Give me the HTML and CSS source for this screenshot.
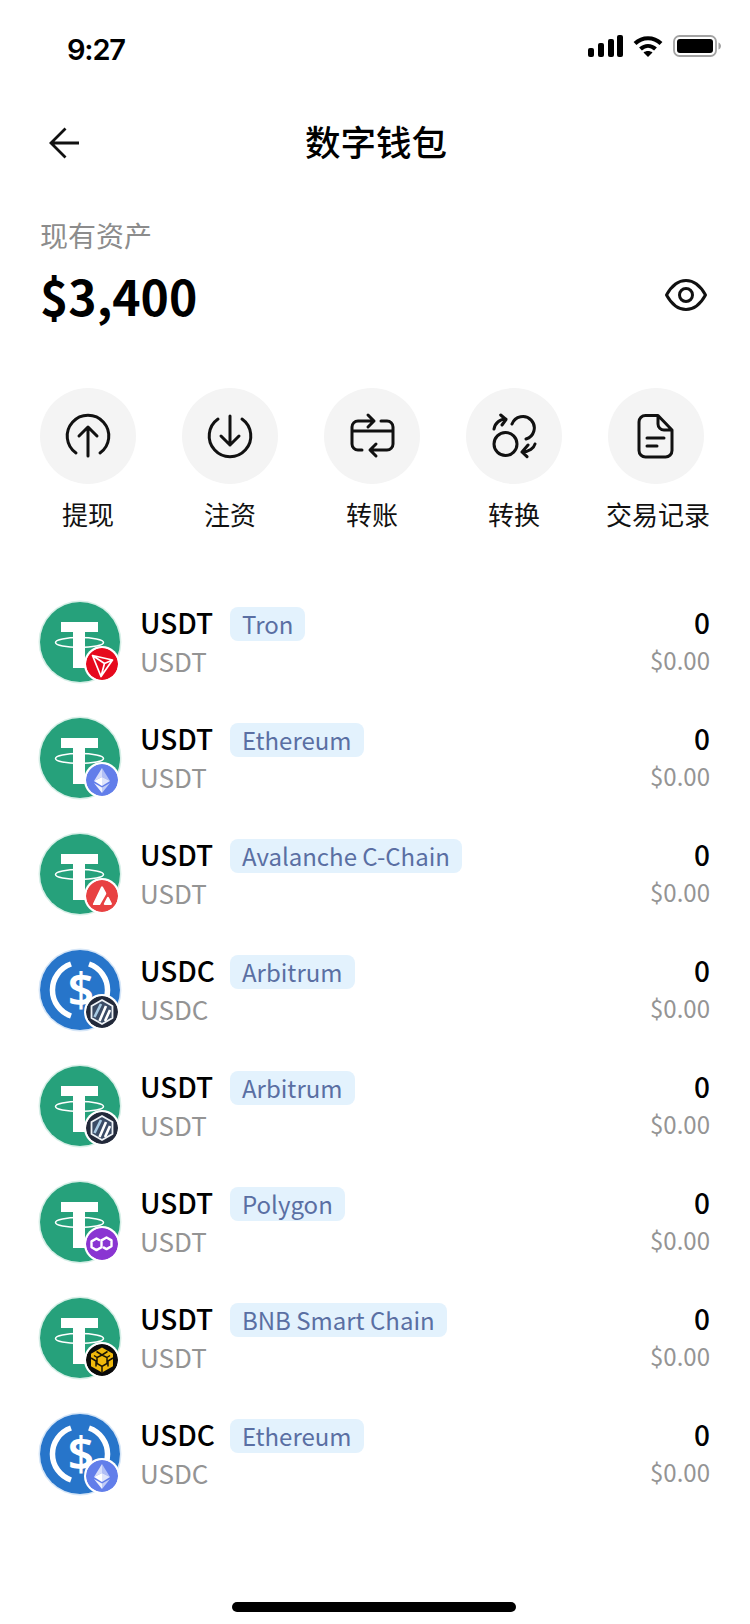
FILE: index.html
```html
<!DOCTYPE html>
<html lang="zh-CN">
<head>
  <meta charset="UTF-8">
  <meta name="viewport" content="width=device-width, initial-scale=1">
  <title>数字钱包</title>
  <link rel="stylesheet" href="styles.css">
</head>
<body>
  <!-- shared logos -->
  <svg class="defs" width="0" height="0" aria-hidden="true">
    <symbol id="usdt" viewBox="0 0 80 80">
      <circle cx="40" cy="40" r="40" fill="#26a17b"/>
      <path d="M21 20h37v10H45v12h-12V30H21z M33 42h12v24H33z" fill="#fff"/>
      <ellipse cx="39.500" cy="40.500" rx="24" ry="5" fill="none" stroke="#fff" stroke-width="1.500"/>
    </symbol>
    <symbol id="usdc" viewBox="0 0 80 80">
      <circle cx="40" cy="40" r="40" fill="#2775ca"/>
      <path d="M31 14A27.500 27.500 0 0 0 31 66M49 14A27.500 27.500 0 0 1 49 66" fill="none" stroke="#fff" stroke-width="5.500"/>
    </symbol>
    <symbol id="tron" viewBox="0 0 32 32">
      <circle cx="16" cy="16" r="16" fill="#e60a1e"/>
      <path d="M6.500 7.500l20 4.500-11.500 16.500zM6.500 7.500l12 8 8-3.500M18.500 15.500l-3.500 13" fill="none" stroke="#fff" stroke-width="1.700" stroke-linejoin="round"/>
    </symbol>
    <symbol id="eth" viewBox="0 0 32 32">
      <circle cx="16" cy="16" r="16" fill="#627eea"/>
      <path d="M16 4v9l-8 4z" fill="#fff" opacity=".75"/>
      <path d="M16 4v9l8 4z" fill="#fff" opacity=".5"/>
      <path d="M8 17l8-4v9z" fill="#fff"/>
      <path d="M24 17l-8-4v9z" fill="#fff" opacity=".8"/>
      <path d="M8 19l8 10v-5.500z" fill="#fff" opacity=".9"/>
      <path d="M24 19l-8 10v-5.500z" fill="#fff" opacity=".6"/>
    </symbol>
    <symbol id="avax" viewBox="0 0 32 32">
      <circle cx="16" cy="16" r="16" fill="#e84142"/>
      <path d="M15 7c.6-1 1.400-1 2 0l3 5.500c.4.800.4 1.400 0 2.100L14 25H8c-1 0-1.400-.7-.9-1.600z" fill="#fff"/>
      <path d="M21 17.500c.5-.9 1.400-.9 1.900 0l2.900 5.800c.4.800 0 1.700-1 1.700h-6c-.9 0-1.300-.8-.8-1.700z" fill="#fff"/>
    </symbol>
    <symbol id="arb" viewBox="0 0 32 32">
      <circle cx="16" cy="16" r="16" fill="#22293a"/>
      <path d="M16 4l10.500 6v12L16 28 5.500 22V10z" fill="#3b4c66" stroke="#eef2f6" stroke-width="1.800" stroke-linejoin="round"/>
      <path d="M8.500 21l6.500-13" fill="none" stroke="#a9cbe4" stroke-width="2.600"/>
      <path d="M13.500 25l6.500-15M19 25l5-11" fill="none" stroke="#fff" stroke-width="2.600"/>
    </symbol>
    <symbol id="matic" viewBox="0 0 32 32">
      <circle cx="16" cy="16" r="16" fill="#8a35d2"/>
      <path d="M14 12.500l-3.500-2-5 2.900v5.800l5 2.900 5-2.900v-6.800l5-2.900 5 2.900v5.800l-5 2.900-3.500-2" fill="none" stroke="#fff" stroke-width="2.400" stroke-linejoin="round"/>
    </symbol>
    <symbol id="bnb" viewBox="0 0 32 32">
      <circle cx="16" cy="16" r="16" fill="#0b0b0b"/>
      <path d="M16 3.500l11 6.300v12.400l-11 6.300-11-6.300V9.800z" fill="#f0b90b"/>
      <path d="M10.500 7.500L16 11l5.500-3.500M5 14l5 3v5.500M27 14l-5 3v5.500M16 11v0M11 13.500l5-2.500 5 2.500v6l-5 3-5-3zM16 23v5.500M11 13.500l-3-2M21 13.500l3-2" fill="none" stroke="#1a1405" stroke-width="1.500"/>
    </symbol>
  </svg>

  <div class="status-bar">
    <span class="time">9:27</span>
    <div class="status-icons">
      <svg width="35" height="22" viewBox="0 0 35 22"><rect x="0" y="13" width="6" height="9" rx="2"/><rect x="10" y="8" width="6" height="14" rx="2"/><rect x="20" y="4" width="6" height="18" rx="2"/><rect x="29" y="0" width="6" height="22" rx="2"/></svg>
      <svg width="30" height="22" viewBox="0 0 30 22"><path d="M2 8.500c7.500-7 18.500-7 26 0M7.500 14c4.500-4 10.500-4 15 0" fill="none" stroke="#000" stroke-width="4.200"/><path d="M15 22l-4.500-4.500c2.500-2 6.500-2 9 0z"/></svg>
      <svg width="48" height="22" viewBox="0 0 48 22"><rect x="1" y="1" width="42" height="20" rx="5.500" fill="none" stroke="#a3a3a3" stroke-width="1.800"/><rect x="4" y="4" width="36" height="14" rx="3"/><path d="M45.500 7.500c1.500.5 2.500 2 2.500 3.500s-1 3-2.500 3.500z" fill="#a3a3a3"/></svg>
    </div>
  </div>

  <header class="nav">
    <svg class="back" width="34" height="34" viewBox="0 0 34 34"><path d="M32 17H5M18.500 2.500L4 17l14.500 14.500" fill="none" stroke="#111" stroke-width="2.800"/></svg>
    <h1>数字钱包</h1>
  </header>

  <section class="assets">
    <p class="assets-label">现有资产</p>
    <div class="assets-row">
      <span class="assets-amount">$3,400</span>
      <svg width="48" height="36" viewBox="0 0 48 36"><path d="M4.500 18C10 8 17 3.500 24 3.500s14 4.500 19.500 14.500C38 28 31 32.500 24 32.500S10 28 4.500 18Z" fill="none" stroke="#111" stroke-width="3" stroke-linejoin="round"/><circle cx="24" cy="18" r="6.500" fill="none" stroke="#111" stroke-width="3"/></svg>
    </div>
  </section>

  <nav class="actions">
    <a class="action">
      <span class="action-icon"><svg viewBox="0 0 64 64"><path d="M20 49a20.800 20.800 0 1 1 24 0M32 52V23M23 32l9-9 9 9"/></svg></span>
      <span>提现</span>
    </a>
    <a class="action">
      <span class="action-icon"><svg viewBox="0 0 64 64"><path d="M20 15a20.800 20.800 0 1 0 24 0M32 12v29M23 32l9 9 9-9"/></svg></span>
      <span>注资</span>
    </a>
    <a class="action">
      <span class="action-icon"><svg viewBox="0 0 64 64"><path d="M34 17H18a6 6 0 0 0-6 6v17a6 6 0 0 0 6 6h4M41 17h6a6 6 0 0 1 6 6v17a6 6 0 0 1-6 6H31M12 27h41M28 11l6 6-6 6M36 40l-6 6 6 6"/></svg></span>
      <span>转账</span>
    </a>
    <a class="action">
      <span class="action-icon"><svg viewBox="0 0 64 64"><circle cx="23.500" cy="40" r="11.500"/><path d="M30 20A11.500 11.500 0 1 1 44 35M12 25c1-6 6-10 12-10M18.700 11l5.300 4.500-4 5.500M53 40c-1 4-6 8-13 8M46 41l-6 7 5 4.700"/></svg></span>
      <span>转换</span>
    </a>
    <a class="action">
      <span class="action-icon"><svg viewBox="0 0 64 64"><path d="M15 18a6.500 6.500 0 0 1 6.500-6.500H34L48 26v20.500a6.500 6.500 0 0 1-6.500 6.500h-20a6.500 6.500 0 0 1-6.500-6.500zM34 11.500V20a6 6 0 0 0 6 6h8M23 34h17M23 42h10"/></svg></span>
      <span class="action-long">交易记录</span>
    </a>
  </nav>

  <ul class="coins">
    <li class="coin">
      <div class="avatar"><svg width="80" height="80"><use href="#usdt"/></svg><svg class="badge"><use href="#tron"/></svg></div>
      <div class="coin-info"><div class="coin-top"><span class="coin-name">USDT</span><span class="tag">Tron</span></div><div class="coin-sub">USDT</div></div>
      <div class="coin-bal"><div class="bal-num">0</div><div class="bal-usd">$0.00</div></div>
    </li>
    <li class="coin">
      <div class="avatar"><svg width="80" height="80"><use href="#usdt"/></svg><svg class="badge"><use href="#eth"/></svg></div>
      <div class="coin-info"><div class="coin-top"><span class="coin-name">USDT</span><span class="tag">Ethereum</span></div><div class="coin-sub">USDT</div></div>
      <div class="coin-bal"><div class="bal-num">0</div><div class="bal-usd">$0.00</div></div>
    </li>
    <li class="coin">
      <div class="avatar"><svg width="80" height="80"><use href="#usdt"/></svg><svg class="badge"><use href="#avax"/></svg></div>
      <div class="coin-info"><div class="coin-top"><span class="coin-name">USDT</span><span class="tag">Avalanche C-Chain</span></div><div class="coin-sub">USDT</div></div>
      <div class="coin-bal"><div class="bal-num">0</div><div class="bal-usd">$0.00</div></div>
    </li>
    <li class="coin">
      <div class="avatar usdc"><svg width="80" height="80"><use href="#usdc"/></svg><span class="usdc-sign">$</span><svg class="badge"><use href="#arb"/></svg></div>
      <div class="coin-info"><div class="coin-top"><span class="coin-name">USDC</span><span class="tag">Arbitrum</span></div><div class="coin-sub">USDC</div></div>
      <div class="coin-bal"><div class="bal-num">0</div><div class="bal-usd">$0.00</div></div>
    </li>
    <li class="coin">
      <div class="avatar"><svg width="80" height="80"><use href="#usdt"/></svg><svg class="badge"><use href="#arb"/></svg></div>
      <div class="coin-info"><div class="coin-top"><span class="coin-name">USDT</span><span class="tag">Arbitrum</span></div><div class="coin-sub">USDT</div></div>
      <div class="coin-bal"><div class="bal-num">0</div><div class="bal-usd">$0.00</div></div>
    </li>
    <li class="coin">
      <div class="avatar"><svg width="80" height="80"><use href="#usdt"/></svg><svg class="badge"><use href="#matic"/></svg></div>
      <div class="coin-info"><div class="coin-top"><span class="coin-name">USDT</span><span class="tag">Polygon</span></div><div class="coin-sub">USDT</div></div>
      <div class="coin-bal"><div class="bal-num">0</div><div class="bal-usd">$0.00</div></div>
    </li>
    <li class="coin">
      <div class="avatar"><svg width="80" height="80"><use href="#usdt"/></svg><svg class="badge"><use href="#bnb"/></svg></div>
      <div class="coin-info"><div class="coin-top"><span class="coin-name">USDT</span><span class="tag">BNB Smart Chain</span></div><div class="coin-sub">USDT</div></div>
      <div class="coin-bal"><div class="bal-num">0</div><div class="bal-usd">$0.00</div></div>
    </li>
    <li class="coin">
      <div class="avatar usdc"><svg width="80" height="80"><use href="#usdc"/></svg><span class="usdc-sign">$</span><svg class="badge"><use href="#eth"/></svg></div>
      <div class="coin-info"><div class="coin-top"><span class="coin-name">USDC</span><span class="tag">Ethereum</span></div><div class="coin-sub">USDC</div></div>
      <div class="coin-bal"><div class="bal-num">0</div><div class="bal-usd">$0.00</div></div>
    </li>
  </ul>

  <div class="home-bar"></div>
</body>
</html>
```

FILE: styles.css
```css
* {
  margin: 0;
  padding: 0;
  box-sizing: border-box;
}
body {
  width: 750px;
  height: 1624px;
  overflow: hidden;
  background: #fff;
  color: #000;
  font-family: "Noto Sans CJK SC", "Noto Sans", sans-serif;
  display: flex;
  flex-direction: column;
}
.defs {
  position: absolute;
}

/* status bar */
.status-bar {
  height: 98px;
  padding: 0 29px 0 67px;
  display: flex;
  align-items: center;
  justify-content: space-between;
}
.time {
  font-family: "Inter", sans-serif;
  font-size: 29px;
  font-weight: 600;
  letter-spacing: -1.200px;
}
.status-icons {
  display: flex;
  align-items: center;
  gap: 10px;
  margin-top: -6px;
}

/* nav */
.nav {
  height: 90px;
  padding: 0 47px 4px;
  display: flex;
  align-items: center;
  justify-content: center;
  position: relative;
}
.back {
  position: absolute;
  left: 47px;
  top: 28px;
}
.nav h1 {
  margin-left: 2px;
  font-size: 35.500px;
  font-weight: 500;
  line-height: 50px;
}

/* assets */
.assets {
  padding: 27px 40px 0 40px;
}
.assets-label {
  font-size: 28px;
  line-height: 40px;
  color: #8c8c8c;
}
.assets-row {
  margin-top: 8px;
  height: 64px;
  display: flex;
  align-items: center;
  justify-content: space-between;
}
.assets-amount {
  font-size: 48px;
  font-weight: 700;
  line-height: 64px;
}

/* actions */
.actions {
  margin-top: 61px;
  padding-left: 17px;
  display: grid;
  grid-template-columns: repeat(5, 142px);
}
.action {
  display: flex;
  flex-direction: column;
  align-items: center;
  gap: 12px;
  font-size: 26px;
  line-height: 36px;
  white-space: nowrap;
  color: #111;
}
.action-long {
  margin-left: 4px;
}
.action-icon {
  width: 96px;
  height: 96px;
  border-radius: 50%;
  background: #f4f4f4;
  display: flex;
  align-items: center;
  justify-content: center;
}
.action-icon svg {
  width: 64px;
  height: 64px;
  fill: none;
  stroke: #111;
  stroke-width: 3;
  stroke-linecap: round;
  stroke-linejoin: round;
}

/* coin list */
.coins {
  margin-top: 51px;
  list-style: none;
}
.coin {
  height: 116px;
  padding: 0 40px;
  display: flex;
  align-items: center;
  gap: 20px;
}
.avatar {
  width: 80px;
  height: 80px;
  margin-top: 2px;
  flex-shrink: 0;
  border-radius: 50%;
  box-shadow: 0 0 0 1.500px #d7efe7;
  position: relative;
}
.avatar.usdc {
  box-shadow: 0 0 0 1.500px #d6e6f7;
}
.avatar > svg {
  display: block;
}
.usdc-sign {
  position: absolute;
  inset: 0 0 3px 2px;
  display: flex;
  align-items: center;
  justify-content: center;
  font-family: "Noto Sans", sans-serif;
  font-size: 46px;
  font-weight: 600;
  line-height: 1;
  color: #fff;
}
.badge {
  position: absolute;
  left: 44px;
  top: 44px;
  width: 36px;
  height: 36px;
  padding: 2px;
  background: #fff;
  border-radius: 50%;
}
.coin-info {
  flex: 1;
  margin-top: -2px;
}
.coin-top {
  display: flex;
  align-items: center;
  height: 40px;
}
.coin-name {
  width: 90px;
  font-size: 28px;
  font-weight: 500;
  line-height: 40px;
}
.tag {
  height: 34px;
  margin-top: 4px;
  padding: 0 12px;
  border-radius: 8px;
  background: #e3f2fd;
  color: #5a6fa3;
  font-size: 24px;
  line-height: 34px;
}
.coin-sub {
  font-size: 26px;
  line-height: 37px;
  color: #949494;
}
.coin-bal {
  margin-top: -2px;
  text-align: right;
}
.bal-num {
  font-size: 28px;
  font-weight: 500;
  line-height: 40px;
}
.bal-usd {
  font-size: 24px;
  line-height: 36px;
  color: #949494;
}

.home-bar {
  position: absolute;
  left: 232px;
  bottom: 12px;
  width: 284px;
  height: 10px;
  border-radius: 5px;
  background: #000;
}
```
